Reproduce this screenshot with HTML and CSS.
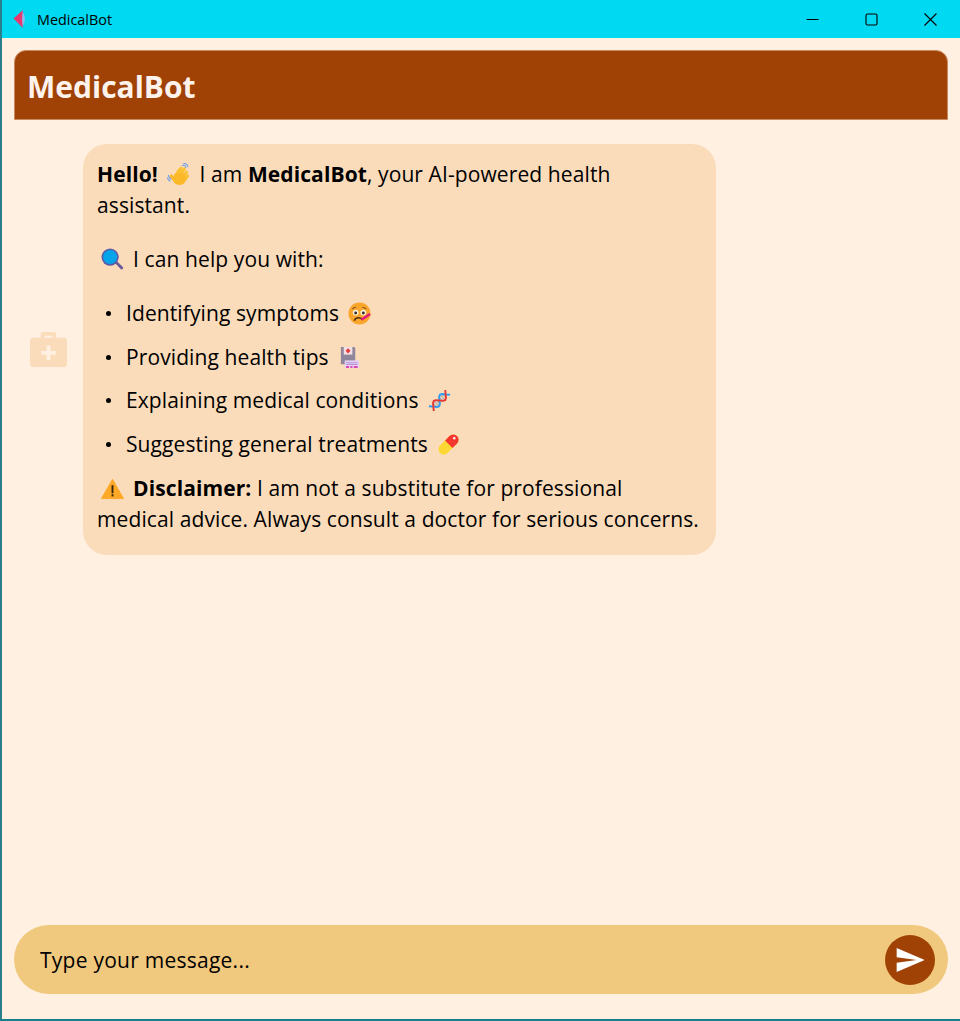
FILE: index.html
```html
<!DOCTYPE html>
<html lang="en">
<head>
<meta charset="utf-8">
<title>MedicalBot</title>
<link rel="stylesheet" href="styles.css">
</head>
<body>
<div class="window">
  <div class="titlebar">
    <svg class="app-icon" viewBox="0 0 16 20"><path d="M10 2Q16 10 10 18z" fill="#8cb8ea"/><path d="M11 1 1.500 9.500 11 19Q9 10 11 1z" fill="#e8366f"/></svg>
    <span class="app-name">MedicalBot</span>
    <div class="controls">
      <button class="ctl"><svg viewBox="0 0 13 13"><path d="M0.500 6.500H12.500" stroke="#000" stroke-width="1" fill="none"/></svg></button>
      <button class="ctl"><svg viewBox="0 0 13 13"><rect x="1" y="1" width="11" height="11" rx="1.500" stroke="#000" stroke-width="1.100" fill="none"/></svg></button>
      <button class="ctl"><svg viewBox="0 0 13 13"><path d="M0.500 0.500 12.500 12.500M12.500 0.500 0.500 12.500" stroke="#000" stroke-width="1.100" fill="none"/></svg></button>
    </div>
  </div>
  <div class="app">
    <header class="header"><h1>MedicalBot</h1></header>
    <main class="chat">
      <div class="row">
        <svg class="avatar" viewBox="0 0 38 38"><path d="M11 7V4a3 3 0 0 1 3-3h10a3 3 0 0 1 3 3v3h-4V5h-8v2z" fill="#fadcbb"/><rect x="0" y="7" width="38" height="30" rx="3" fill="#fadcbb"/><path d="M17 15h4v5.500h5.500v4H21V30h-4v-5.500h-5.500v-4H17z" fill="#fff0e1"/></svg>
        <div class="bubble">
          <p><b>Hello!</b> <svg class="emoji" viewBox="0 0 24 24"><g fill="none" stroke="#fbc02d" stroke-width="3.200" stroke-linecap="round"><path d="M8 15 12.500 7.500"/><path d="M11 13.500 14.500 5.500"/><path d="M14 13.500 18 6"/><path d="M16 15 20.500 9.500"/><path d="M18 18 21.500 13.500"/></g><ellipse cx="13" cy="16.500" rx="7" ry="6.500" fill="#fbb829"/><path d="M7 17 4.500 13.500" stroke="#fbb829" stroke-width="3.200" stroke-linecap="round"/><path d="M15.500 2.500C17.500 2 19.500 3 20 5M17 .5C19.500.5 21.500 2 22 4M1.500 12.500C1.500 14.500 2.500 16 4.500 17M.2 15C.7 17 2 18.500 3.500 19" stroke="#6f9fe6" stroke-width="1.100" fill="none"/></svg> I am <b>MedicalBot</b>, your AI-powered health assistant.</p>
          <p class="lead"><svg class="emoji" viewBox="0 0 24 24"><path d="M14 15l2-2 7 7c.700 1-.9 3-2.200 2.200z" fill="#6b5b9a"/><circle cx="9.500" cy="9.500" r="9" fill="#5c5aa8"/><circle cx="9.500" cy="9.500" r="7.300" fill="#04a4ea"/></svg> I can help you with:</p>
          <ul class="list">
            <li>Identifying symptoms <svg class="emoji" viewBox="0 0 24 24"><circle cx="12" cy="12" r="11.500" fill="#f9a62b"/><path d="M4.500 7.500C5.500 6 7 5.500 8.500 5.500M19 7.500C18 6 16.500 5.500 15 5.500" stroke="#8a5a20" stroke-width="1.200" fill="none"/><circle cx="8" cy="11" r="3" fill="#fff2dc"/><circle cx="16" cy="11" r="3" fill="#fff2dc"/><circle cx="8" cy="11.500" r="1.500" fill="#3a2a20"/><circle cx="16" cy="11.500" r="1.500" fill="#3a2a20"/><path d="M6.500 19.500C8 16 12 15.500 15 18" stroke="#4a2e14" stroke-width="1.700" fill="none"/><path d="M14 18.500 23 12.500" stroke="#e0187f" stroke-width="2.400"/></svg></li>
            <li>Providing health tips <svg class="emoji" viewBox="0 0 24 24"><path d="M3 1h14l1 1v17H3z" fill="#90869c"/><rect x="6" y="1" width="9" height="8" fill="#f6dfe2"/><path d="M10.500 2.300 13 5 10.500 7.700 8 5z" fill="#e53935"/><path d="M7 15H22V23H7z" fill="#e3d2f2"/><path d="M8.500 17.500H20.500M8.500 19.300H20.500" stroke="#b78fd6"/><path d="M8.500 22H11.500M13 22H15M16.500 22H20.500" stroke="#d81b9a" stroke-width="1.600"/></svg></li>
            <li>Explaining medical conditions <svg class="emoji" viewBox="0 0 24 24"><path d="M5.200 14.800 9.200 18.800M6 12.400 11.600 18M8.400 11.600 12.400 15.600M15.600 12.400 11.600 8.400M18 11.600 12.400 6M18.800 9.200 14.800 5.200" stroke="#a9a9a9" stroke-width="1.100"/><polyline points="1,18 5.600,18.400 9.200,18.800 11.600,18 12.400,15.600 12,12 11.600,8.400 12.400,6 14.800,5.200 18.400,5.600 23,6" fill="none" stroke="#2f9bf0" stroke-width="2" stroke-linejoin="round"/><polyline points="6,23 5.600,18.400 5.200,14.800 6,12.400 8.400,11.600 12,12 15.600,12.400 18,11.600 18.800,9.200 18.400,5.600 18,1" fill="none" stroke="#e53935" stroke-width="2" stroke-linejoin="round"/></svg></li>
            <li>Suggesting general treatments <svg class="emoji" viewBox="0 0 24 24"><path d="M7 17 17 7" stroke="#fdd835" stroke-width="11" stroke-linecap="round"/><circle cx="17" cy="7" r="5.500" fill="#f4372f"/><path d="M17 7 12.300 11.700" stroke="#f4372f" stroke-width="11"/><circle cx="18" cy="5.500" r="1.300" fill="#fff"/></svg></li>
          </ul>
          <p class="note"><svg class="emoji" viewBox="0 0 24 24"><path d="M12 2.500 23.500 22.500H.500z" fill="#ffa726" stroke="#ffa726" stroke-width="1" stroke-linejoin="round"/><rect x="11" y="8.500" width="2" height="8.500" fill="#3a2a10"/><rect x="11" y="18" width="2" height="2.300" fill="#3a2a10"/></svg> <b>Disclaimer:</b> I am not a substitute for professional medical advice. Always consult a doctor for serious concerns.</p>
        </div>
      </div>
    </main>
    <form class="composer">
      <input class="field" type="text" placeholder="Type your message...">
      <button class="send" type="button"><svg viewBox="0 0 24 24"><path d="M2 21 23 12 2 3V10L17 12 2 14z" fill="#fff"/></svg></button>
    </form>
  </div>
</div>
</body>
</html>
```

FILE: styles.css
```css
* { box-sizing: border-box; }
html, body { margin: 0; height: 100%; }
body { font-family: "Open Sans", "Noto Sans", sans-serif; color: #000; overflow: hidden; }
.window {
  height: 1021px;
  display: flex;
  flex-direction: column;
  background: #fff0e1;
  border-left: 2px solid #2b7f8c;
  border-bottom: 2px solid #16808c;
}
.titlebar {
  height: 38px;
  flex: none;
  background: #00d9f2;
  display: flex;
  align-items: center;
  padding-left: 10px;
}
.app-icon { width: 16px; height: 20px; margin-right: 9px; }
.app-name { font-size: 14.400px; }
.controls { margin-left: auto; display: flex; }
.ctl {
  width: 59px;
  height: 38px;
  border: 0;
  padding: 0;
  background: none;
  display: flex;
  align-items: center;
  justify-content: center;
}
.ctl svg { width: 13px; height: 13px; }
.app {
  flex: 1;
  min-height: 0;
  display: flex;
  flex-direction: column;
  padding: 12px 12px 25px;
}
.header {
  height: 70px;
  flex: none;
  background: #a04106;
  border: 1px solid #c98a60;
  border-radius: 12px 12px 0 0;
  display: flex;
  align-items: center;
  padding-left: 12px;
}
.header h1 { margin: 0; padding-top: 2px; color: #fdf3ec; font-size: 30px; font-weight: 700; }
.chat { flex: 1; min-height: 0; padding-top: 24px; }
.row { display: flex; align-items: center; gap: 16px; padding-left: 16px; }
.avatar { width: 37px; height: 37px; flex: none; margin-top: 1px; }
.bubble {
  width: 633px;
  background: #fadcbb;
  border-radius: 24px;
  padding: 15px 14px 20px;
  font-size: 21px;
  line-height: 31px;
  letter-spacing: 0.100px;
}
.bubble p { margin: 0; }
.lead { margin-top: 23px !important; }
.list { list-style: none; margin: 23px 0 0; padding: 0; }
.list li { margin-bottom: 12.700px; padding-left: 29px; position: relative; }
.list li::before {
  content: "";
  position: absolute;
  left: 9px;
  top: 13px;
  width: 5px;
  height: 5px;
  border-radius: 50%;
  background: #000;
}
.emoji { width: 23px; height: 23px; vertical-align: -4px; margin: 0 4px 0 3.500px; }
.composer {
  height: 69px;
  flex: none;
  background: #f1c97e;
  border-radius: 35px;
  display: flex;
  align-items: center;
  padding: 0 13px 0 26px;
}
.field {
  flex: 1;
  border: 0;
  outline: 0;
  background: none;
  font: 21px "Open Sans", "Noto Sans", sans-serif;
  letter-spacing: 0.250px;
  color: #000;
  padding: 0;
}
.field::placeholder { color: #000; opacity: 1; }
.send {
  width: 50px;
  height: 50px;
  border: 0;
  border-radius: 50%;
  background: #a04106;
  padding: 0;
  display: flex;
  align-items: center;
  justify-content: center;
}
.send svg { width: 32px; height: 32px; }
```
